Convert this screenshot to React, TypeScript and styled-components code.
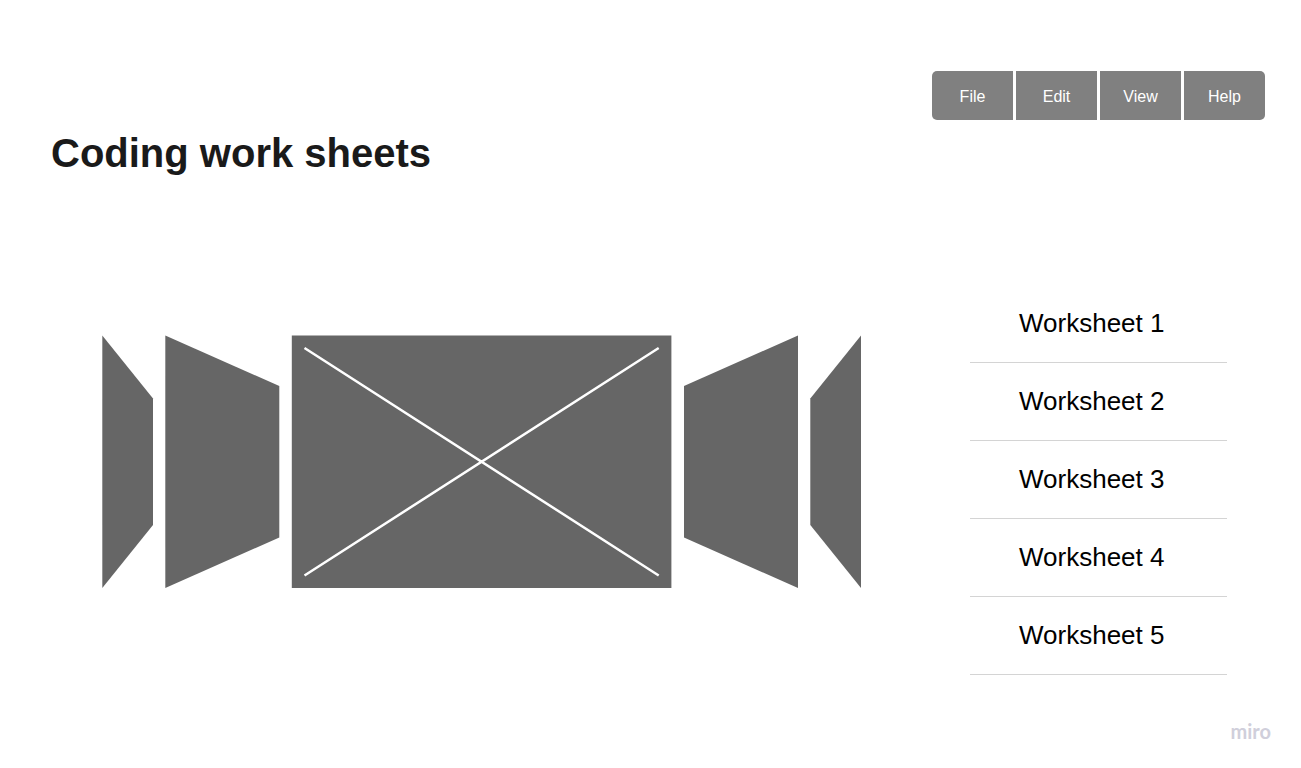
import React from "react";
import styled, { createGlobalStyle } from "styled-components";

const GlobalStyle = createGlobalStyle`
  *, *::before, *::after { box-sizing: border-box; }
  body {
    margin: 0;
    background: #ffffff;
    font-family: "Liberation Sans", Arial, sans-serif;
  }
`;

const Page = styled.div`
  display: flex;
  flex-direction: column;
  min-height: 100vh;
  padding: 71px 30px 25px 51px;
`;

const MenuBar = styled.nav`
  align-self: flex-end;
  display: flex;
  gap: 3px;
  margin-right: 6px;
  border-radius: 5px;
  overflow: hidden;
`;

const MenuButton = styled.button`
  width: 81px;
  height: 49px;
  padding: 2px 0 0;
  border: 0;
  background: #808080;
  color: #ffffff;
  font-family: inherit;
  font-size: 16px;
  line-height: 20px;
  cursor: pointer;
`;

const Title = styled.h1`
  margin: 9px 0 0;
  color: #1a1a1a;
  font-size: 40px;
  font-weight: 700;
  line-height: 48px;
`;

const Content = styled.main`
  display: flex;
  align-items: flex-start;
  gap: 109px;
  margin: 108px 44px 0 51px;
`;

const Carousel = styled.svg`
  display: block;
  flex: 1;
  min-width: 0;
  height: auto;
  margin-top: 50px;
`;

const WorksheetList = styled.ul`
  flex: none;
  width: 257px;
  margin: 0;
  padding: 0;
  list-style: none;
`;

const WorksheetItem = styled.li`
  border-bottom: 1px solid #d4d4d4;
`;

const WorksheetLink = styled.a`
  display: block;
  padding: 23px 49px 24px;
  color: #000000;
  font-size: 26px;
  line-height: 30px;
  text-decoration: none;
  white-space: nowrap;
`;

const Footer = styled.footer`
  display: flex;
  justify-content: flex-end;
  margin-top: auto;
`;

const Brand = styled.span`
  color: #d0cfdb;
  font-family: Lato, sans-serif;
  font-size: 20px;
  font-weight: 700;
  line-height: 24px;
`;

const menus = ["File", "Edit", "View", "Help"];
const worksheets = [1, 2, 3, 4, 5];

export default function App() {
  return (
    <>
      <GlobalStyle />
      <Page>
        <MenuBar aria-label="Main">
          {menus.map((label) => (
            <MenuButton key={label} type="button">
              {label}
            </MenuButton>
          ))}
        </MenuBar>
        <Title>Coding work sheets</Title>
        <Content>
          <Carousel viewBox="0 0 759 253" role="img" aria-label="Worksheet preview carousel">
            <g fill="#666666">
              <path d="M0.3 0.5 L51 63.5 V190 L0.3 253 Z" />
              <path d="M63.3 0.5 L177.3 51 V202.5 L63.3 253 Z" />
              <path d="M189.8 0.5 H569.4 V253 H189.8 Z" />
              <path d="M696 0.5 L582 51 V202.5 L696 253 Z" />
              <path d="M759 0.5 L708.3 63.5 V190 L759 253 Z" />
            </g>
            <path
              d="M202.5 13 L556.7 240.5 M556.7 13 L202.5 240.5"
              fill="none"
              stroke="#ffffff"
              strokeWidth="2.5"
            />
          </Carousel>
          <WorksheetList>
            {worksheets.map((n) => (
              <WorksheetItem key={n}>
                <WorksheetLink href={`#worksheet-${n}`}>Worksheet {n}</WorksheetLink>
              </WorksheetItem>
            ))}
          </WorksheetList>
        </Content>
        <Footer>
          <Brand>miro</Brand>
        </Footer>
      </Page>
    </>
  );
}
